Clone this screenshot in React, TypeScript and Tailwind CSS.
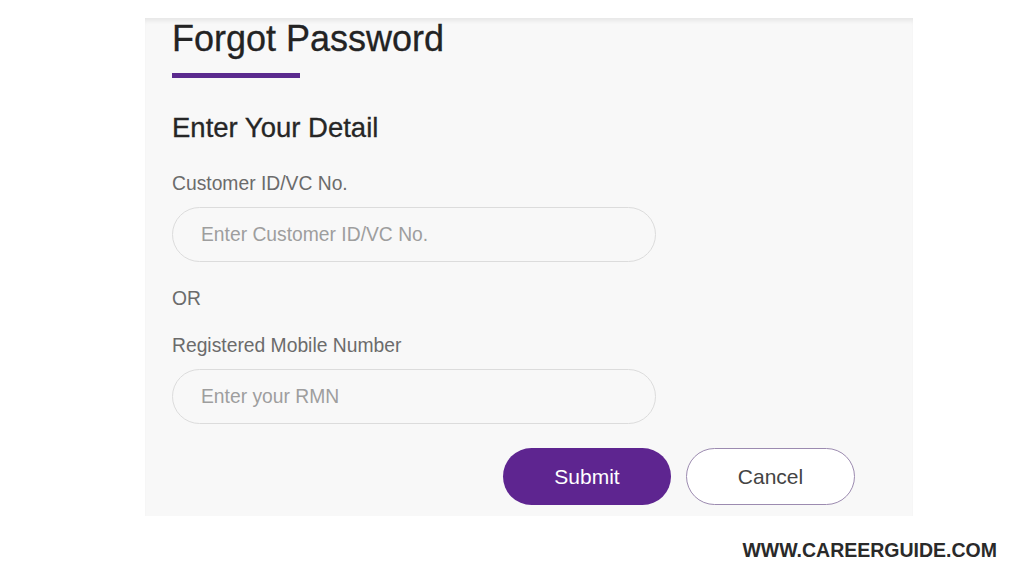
import React from "react";

const font = { fontFamily: '"Liberation Sans", Arial, sans-serif' };

function PillInput({ placeholder }: { placeholder: string }) {
  return (
    <input
      type="text"
      placeholder={placeholder}
      className="w-[484px] h-[55px] rounded-full border border-[#dcdcdc] bg-[#f8f8f8] pl-[28px] text-[19.3px] text-[#555] placeholder:text-[#9e9e9e] outline-none"
    />
  );
}

export default function App() {
  return (
    <div className="w-full h-[576px] bg-white overflow-hidden" style={font}>
      {/* Card */}
      <div className="ml-[145px] mt-[18px] w-[768px] h-[498px] bg-[#f8f8f8] pl-[27px] pt-[1px] shadow-[inset_0_5px_4px_-2px_rgba(0,0,0,0.07)]">
        <h1 className="text-[36px] leading-[40px] text-[#232323] [-webkit-text-stroke:0.3px_#232323]">
          Forgot Password
        </h1>
        <div className="mt-[14px] w-[128px] h-[5px] bg-[#5b2a8e]" />

        <h2 className="mt-[34px] text-[27.5px] leading-[32px] text-[#262626] [-webkit-text-stroke:0.3px_#262626]">
          Enter Your Detail
        </h2>

        <div className="mt-[28px] text-[19.3px] leading-[24px] text-[#6b6b6b]">Customer ID/VC No.</div>
        <div className="mt-[11px]">
          <PillInput placeholder="Enter Customer ID/VC No." />
        </div>

        <div className="mt-[25px] text-[19.3px] leading-[24px] text-[#6b6b6b]">OR</div>

        <div className="mt-[23px] text-[19.3px] leading-[24px] text-[#6b6b6b]">Registered Mobile Number</div>
        <div className="mt-[11px]">
          <PillInput placeholder="Enter your RMN" />
        </div>

        <div className="mt-[24px] ml-[331px] flex gap-[15px]">
          <button className="w-[168px] h-[57px] rounded-full bg-[#5e2590] text-white text-[21px]">
            Submit
          </button>
          <button className="w-[169px] h-[57px] rounded-full bg-white border border-[#9c8bb0] text-[#444] text-[21px]">
            Cancel
          </button>
        </div>
      </div>

      <div className="mt-[22px] pr-[27px] flex justify-end">
        <span className="text-[19.5px] leading-[24px] font-bold text-[#2a2a2a]">WWW.CAREERGUIDE.COM</span>
      </div>
    </div>
  );
}
